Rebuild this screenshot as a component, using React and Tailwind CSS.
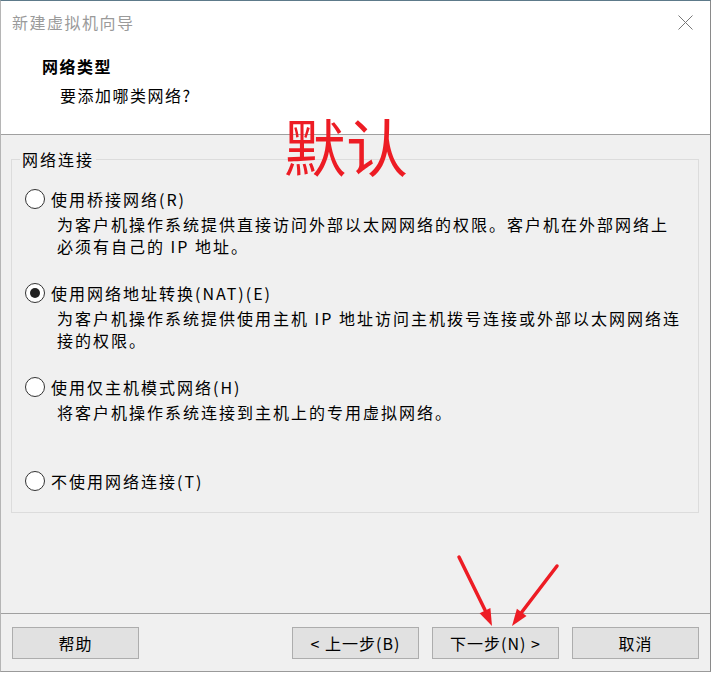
import React, { useState } from "react";

const cjk = "font-['Microsoft_YaHei','Noto_Sans_CJK_SC',sans-serif]";

const Radio = ({ checked }) => (
  <span className="w-[20px] h-[20px] rounded-full border border-[#333] bg-white flex items-center justify-center shrink-0">
    {checked && <span className="w-[10px] h-[10px] rounded-full bg-[#222]" />}
  </span>
);

const Option = ({ label, desc, checked, onSelect, className }) => (
  <div className={className}>
    <div className="flex items-center h-[22px] pl-[13px] cursor-default" onClick={onSelect}>
      <Radio checked={checked} />
      <span className="ml-[6px] leading-[22px] whitespace-nowrap">{label}</span>
    </div>
    {desc && (
      <div className="mt-[3px] pl-[45px] leading-[22px] whitespace-nowrap">
        {desc}
      </div>
    )}
  </div>
);

const Button = ({ children }) => (
  <button className="w-[127px] h-[32px] bg-[#e1e1e1] border border-[#adadad] text-[16px] text-black tracking-[1px] flex items-center justify-center">
    {children}
  </button>
);

export default function App() {
  const [mode, setMode] = useState("nat");

  return (
    <div className={`relative w-[711px] h-[672px] bg-[#f0f0f0] border-t border-t-[#5d7a8a] border-l border-l-[#b5b5b5] border-r border-r-[#8a8a8a] border-b border-b-[#9a9a9a] flex flex-col text-[16px] tracking-[2px] text-black ${cjk}`}>
      {/* header */}
      <div className="bg-white border-b border-b-[#a0a0a0] h-[134px] shrink-0">
        <div className="h-[43px] flex items-center justify-between pl-[11px] pr-[17px]">
          <span className="text-[#9a9a9a] tracking-[1.5px] -mt-[1px]">新建虚拟机向导</span>
          <svg width="15" height="15" viewBox="0 0 15 15">
            <path d="M0.5 0.5 L14.5 14.5 M14.5 0.5 L0.5 14.5" stroke="#777" strokeWidth="1" />
          </svg>
        </div>
        <div className="pl-[41px] mt-[11px] leading-[22px] font-bold tracking-[1.5px]">网络类型</div>
        <div className="pl-[59px] mt-[7px] leading-[22px] tracking-[1.5px]">要添加哪类网络?</div>
      </div>

      {/* body */}
      <div className="flex-1 px-[10px]">
        <fieldset className="mt-[13px] border border-[#dcdcdc] pb-[20px] w-[688px]">
          <legend className="ml-[8px] px-[2px] leading-[22px]">网络连接</legend>
          <Option
            className="mt-[18px]"
            label="使用桥接网络(R)"
            checked={mode === "bridge"}
            onSelect={() => setMode("bridge")}
            desc={
              <>
                为客户机操作系统提供直接访问外部以太网网络的权限。客户机在外部网络上
                <br />
                必须有自己的 IP 地址。
              </>
            }
          />
          <Option
            className="mt-[25px]"
            label="使用网络地址转换(NAT)(E)"
            checked={mode === "nat"}
            onSelect={() => setMode("nat")}
            desc={
              <>
                为客户机操作系统提供使用主机 IP 地址访问主机拨号连接或外部以太网网络连
                <br />
                接的权限。
              </>
            }
          />
          <Option
            className="mt-[25px]"
            label="使用仅主机模式网络(H)"
            checked={mode === "host"}
            onSelect={() => setMode("host")}
            desc="将客户机操作系统连接到主机上的专用虚拟网络。"
          />
          <Option
            className="mt-[47px]"
            label="不使用网络连接(T)"
            checked={mode === "none"}
            onSelect={() => setMode("none")}
          />
        </fieldset>
      </div>

      {/* footer */}
      <div className="h-[58px] shrink-0 border-t border-t-[#a0a0a0] pt-[13px] px-[11px] flex">
        <Button>帮助</Button>
        <div className="ml-auto flex gap-[13px]">
          <Button>&lt; 上一步(B)</Button>
          <Button>下一步(N) &gt;</Button>
          <Button>取消</Button>
        </div>
      </div>

      {/* annotation overlay */}
      <div className="absolute left-[283px] top-[104px] text-[62px] leading-[80px] tracking-[0px] text-[#ed1c24] pointer-events-none">
        默认
      </div>
      <svg className="absolute left-[-1px] top-[-1px] pointer-events-none" width="712" height="673">
        <line x1="459" y1="557" x2="485" y2="610" stroke="#ed1c24" strokeWidth="3.5" strokeLinecap="round" />
        <polygon points="492,626 479.6,613.2 490.4,608" fill="#ed1c24" />
        <line x1="557" y1="566" x2="521.7" y2="612.3" stroke="#ed1c24" strokeWidth="3.5" strokeLinecap="round" />
        <polygon points="512,626 516.9,608.7 526.5,615.9" fill="#ed1c24" />
      </svg>
    </div>
  );
}
